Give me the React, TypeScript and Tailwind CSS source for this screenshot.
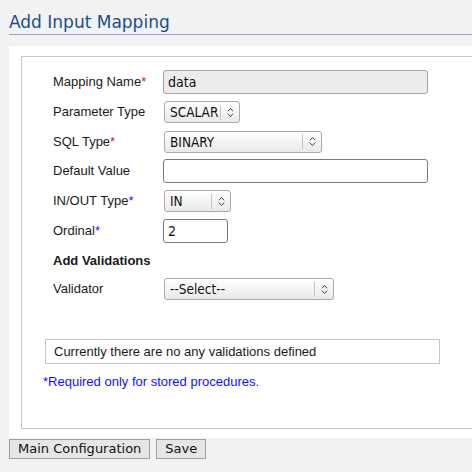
import React from 'react';

const labelFont = { fontFamily: '"Liberation Sans", Arial, sans-serif' };
const ctrlFont = { fontFamily: '"DejaVu Sans Condensed", "DejaVu Sans", sans-serif' };

function Chevron() {
  return (
    <svg width="7" height="11" viewBox="0 0 7 11" fill="none" stroke="#3c3c3c" strokeWidth="1" strokeLinecap="round" strokeLinejoin="round">
      <path d="M1.2 4 L3.5 1.5 L5.8 4" />
      <path d="M1.2 7 L3.5 9.5 L5.8 7" />
    </svg>
  );
}

function FakeSelect({ value, className }: { value: string; className: string }) {
  return (
    <div
      className={`ml-px flex h-[22px] items-center rounded-[3px] border border-[#aaaaaa] bg-gradient-to-b from-white to-[#e9e9e9] text-[13.5px] text-[#111] ${className}`}
      style={ctrlFont}
    >
      <span className="min-w-0 flex-1 whitespace-nowrap pl-[5px] leading-[20px]">{value}</span>
      <span className="h-[15px] w-px shrink-0 bg-[#c6c6c6]" />
      <span className="flex w-[18px] shrink-0 justify-center">
        <Chevron />
      </span>
    </div>
  );
}

function TextBox({ value = '', className }: { value?: string; className: string }) {
  return (
    <div
      className={`flex h-[24px] items-center rounded-[3px] border pl-[4px] text-[14px] leading-[22px] text-[#111] ${className}`}
      style={ctrlFont}
    >
      {value}
    </div>
  );
}

function Row({ label, mark, h, children }: { label: React.ReactNode; mark?: 'red' | 'blue'; h: string; children?: React.ReactNode }) {
  return (
    <div className={`flex items-center ${h}`}>
      <div className="w-[110px] text-[13px] leading-[16px] text-[#1a1a1a]" style={labelFont}>
        {label}
        {mark === 'red' && <span className="text-[#e01010]">*</span>}
        {mark === 'blue' && <span className="text-[#1a1aff]">*</span>}
      </div>
      {children}
    </div>
  );
}

export default function App() {
  return (
    <div className="h-[472px] w-[472px] overflow-hidden bg-[#f2f2f2]">
      <div className="ml-[9px] border-b border-[#8ea4cc] pb-[2px] pt-[12px]">
        <h1 className="text-[17px] leading-[20px] text-[#16508c]" style={{ fontFamily: '"DejaVu Sans", sans-serif' }}>
          Add Input Mapping
        </h1>
      </div>

      <div className="ml-[9px] mt-[11px] overflow-hidden bg-white pb-[9px] pl-[12px] pt-[10px]">
        <div className="w-[480px] border border-[#c8c8c8] pb-[39px] pt-[10px]">
          <div className="pl-[31px]">
            <Row label="Mapping Name" mark="red" h="h-[30px]">
              <TextBox value="data" className="w-[265px] border-[#a3a3a3] bg-[#ececec]" />
            </Row>
            <Row label="Parameter Type" h="h-[30px]">
              <FakeSelect value="SCALAR" className="w-[76px]" />
            </Row>
            <Row label="SQL Type" mark="red" h="h-[29px]">
              <FakeSelect value="BINARY" className="w-[158px]" />
            </Row>
            <Row label="Default Value" h="h-[30px]">
              <TextBox className="w-[265px] border-[#7a7a7a] bg-white" />
            </Row>
            <Row label="IN/OUT Type" mark="blue" h="h-[30px]">
              <FakeSelect value="IN" className="w-[67px]" />
            </Row>
            <Row label="Ordinal" mark="blue" h="h-[30px]">
              <TextBox value="2" className="w-[65px] border-[#7a7a7a] bg-white" />
            </Row>
            <Row label={<span className="font-bold">Add Validations</span>} h="h-[29px]" />
            <Row label="Validator" h="h-[28px]">
              <FakeSelect value="--Select--" className="w-[170px]" />
            </Row>
          </div>

          <div
            className="ml-[23px] mt-[36px] flex h-[25px] w-[395px] items-center border border-[#c8c8c8] pl-[8px] text-[13px] text-[#1a1a1a]"
            style={labelFont}
          >
            Currently there are no any validations defined
          </div>

          <p className="ml-[21px] mt-[10px] text-[13px] leading-[15px] text-[#1010ff]" style={labelFont}>
            *Required only for stored procedures.
          </p>
        </div>
      </div>

      <div className="ml-[9px] mt-px flex gap-[6px]" style={{ fontFamily: '"DejaVu Sans", sans-serif' }}>
        <button className="h-[20px] border border-[#a0a0a0] bg-[#e6e6e6] px-[8px] text-[13px] leading-[18px] text-[#111]">
          Main Configuration
        </button>
        <button className="h-[20px] border border-[#a0a0a0] bg-[#e6e6e6] px-[8px] text-[13px] leading-[18px] text-[#111]">
          Save
        </button>
      </div>
    </div>
  );
}
